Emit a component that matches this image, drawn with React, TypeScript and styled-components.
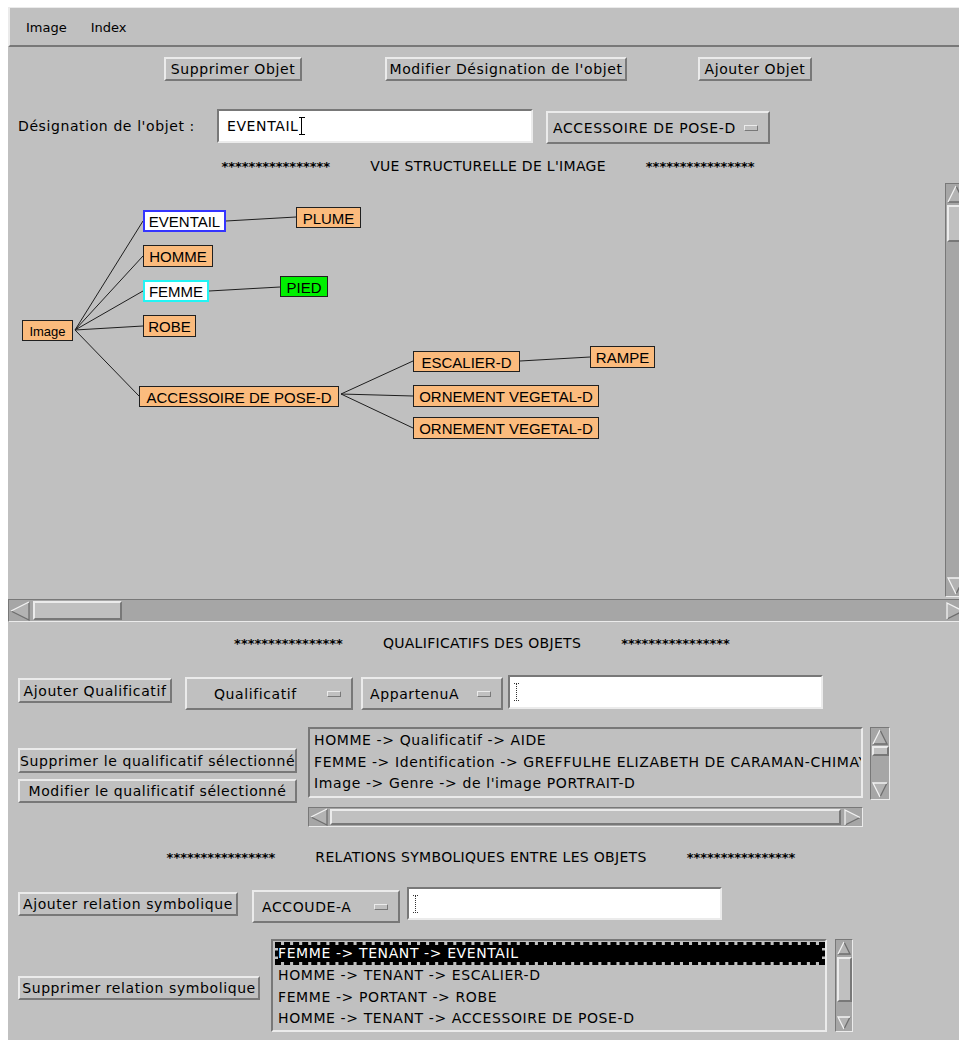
import React from "react";
import styled, { createGlobalStyle, css } from "styled-components";

const BG = "#c0c0c0";
const LIGHT = "#ebebeb";
const DARK = "#787878";
const TROUGH = "#a6a6a6";
const UI_FONT = `"DejaVu Sans", "Liberation Sans", sans-serif`;
const NODE_FONT = `"Liberation Sans", Arial, sans-serif`;

const GlobalStyle = createGlobalStyle`
  html, body { margin: 0; padding: 0; background: #ffffff; overflow: hidden; }
  body { padding: 7px 0 0 8px; font-family: ${UI_FONT}; }
`;

const raised = css`
  border-style: solid;
  border-width: 2px;
  border-color: ${LIGHT} ${DARK} ${DARK} ${LIGHT};
`;
const sunken = css`
  border-style: solid;
  border-width: 2px;
  border-color: ${DARK} ${LIGHT} ${LIGHT} ${DARK};
`;

const Window = styled.div`
  box-sizing: border-box;
  width: 960px;
  height: 1033px;
  background: ${BG};
  display: flex;
  flex-direction: column;
  overflow: hidden;
  color: #000;
  font-family: ${UI_FONT};
  font-size: 14px;
  letter-spacing: 0.6px;
  & * { box-sizing: border-box; }
`;

const MenuBar = styled.div`
  flex: 0 0 40px;
  display: flex;
  align-items: center;
  gap: 24px;
  padding: 1px 0 0 16px;
  border-top: 1px solid ${LIGHT};
  border-left: 2px solid ${LIGHT};
  border-bottom: 2px solid ${DARK};
  font-size: 13px;
  letter-spacing: 0;
`;
const MenuItem = styled.span`
  cursor: default;
`;

const Row = styled.div<{ $mt: number; $h: number }>`
  display: flex;
  align-items: flex-start;
  flex: 0 0 ${(p) => p.$h}px;
  margin-top: ${(p) => p.$mt}px;
`;
const ObjectToolbar = styled(Row)``;
const DesignationRow = styled(Row)``;
const QualifierRow = styled(Row)``;
const RelationRow = styled(Row)``;
const QualifierBlock = styled(Row)``;
const RelationBlock = styled(Row)``;

const PushButton = styled.button<{ $w: number; $h?: number; $ml?: number; $mt?: number }>`
  ${raised};
  flex: none;
  width: ${(p) => p.$w}px;
  height: ${(p) => p.$h ?? 24}px;
  margin: ${(p) => p.$mt ?? 0}px 0 0 ${(p) => p.$ml ?? 0}px;
  padding: 0;
  background: ${BG};
  color: #000;
  font: inherit;
  letter-spacing: inherit;
  white-space: nowrap;
  cursor: default;
`;

const FieldLabel = styled.span<{ $w: number; $ml: number; $h: number }>`
  flex: none;
  width: ${(p) => p.$w}px;
  margin-left: ${(p) => p.$ml}px;
  line-height: ${(p) => p.$h}px;
  white-space: nowrap;
`;

const TextField = styled.div<{ $w: number; $h: number; $ml: number; $mt?: number; $pl: number }>`
  ${sunken};
  flex: none;
  display: flex;
  align-items: center;
  width: ${(p) => p.$w}px;
  height: ${(p) => p.$h}px;
  margin: ${(p) => p.$mt ?? 0}px 0 0 ${(p) => p.$ml}px;
  padding-left: ${(p) => p.$pl}px;
  background: #ffffff;
  white-space: nowrap;
`;

const CaretSvg = styled.svg`
  flex: none;
  display: block;
`;

function Caret({ dotted }: { dotted?: boolean }) {
  return (
    <CaretSvg width="7" height="18" viewBox="0 0 7 18">
      {dotted ? (
        <path d="M1 0.5H6M1 17.5H6M3.5 1V17" stroke="#333" strokeWidth="1" strokeDasharray="1 1" fill="none" />
      ) : (
        <path d="M0 0.5H6M0 17.5H6M2.5 0.5V17.5" stroke="#000" strokeWidth="1" fill="none" />
      )}
    </CaretSvg>
  );
}

const OptionMenu = styled.div<{ $w: number; $h: number; $ml: number; $mt: number; $pl: number }>`
  ${raised};
  flex: none;
  display: flex;
  align-items: center;
  width: ${(p) => p.$w}px;
  height: ${(p) => p.$h}px;
  margin: ${(p) => p.$mt}px 0 0 ${(p) => p.$ml}px;
  padding: 0 10px 0 ${(p) => p.$pl}px;
  background: ${BG};
  cursor: default;
`;
const OptionLabel = styled.span`
  flex: 1;
  white-space: nowrap;
  overflow: hidden;
`;
const OptionIndicator = styled.span`
  flex: none;
  width: 14px;
  height: 6px;
  border-style: solid;
  border-width: 1px;
  border-color: ${LIGHT} ${DARK} ${DARK} ${LIGHT};
  background: ${BG};
`;

const SectionHeader = styled.div<{ $mt: number; $shift: number }>`
  flex: 0 0 16px;
  display: flex;
  justify-content: center;
  align-items: center;
  gap: 40px;
  margin-top: ${(p) => p.$mt}px;
  padding-right: ${(p) => p.$shift}px;
  letter-spacing: 0.3px;
  white-space: nowrap;
`;
const Stars = styled.span`
  font-size: 13px;
  font-weight: bold;
  letter-spacing: 0;
`;

const StructurePane = styled.div`
  flex: 0 0 419px;
  margin-top: 6px;
  display: flex;
`;
const Diagram = styled.div`
  position: relative;
  flex: 1;
  overflow: hidden;
`;
const EdgeLayer = styled.svg`
  position: absolute;
  left: 0;
  top: 0;
  width: 100%;
  height: 100%;
`;

type NodeKind = "plain" | "root" | "selected" | "focus" | "leaf";

const nodeLook: Record<NodeKind, ReturnType<typeof css>> = {
  plain: css`
    background: #fbbb7d;
    border: 1px solid #202020;
    font-size: 15px;
  `,
  root: css`
    background: #fbbb7d;
    border: 1px solid #202020;
    font-size: 13px;
  `,
  selected: css`
    background: #ffffff;
    border: 2px solid #3434ff;
    font-size: 15px;
  `,
  focus: css`
    background: #ffffff;
    border: 2px solid #22f4f4;
    font-size: 15px;
  `,
  leaf: css`
    background: #00f000;
    border: 1px solid #202020;
    font-size: 15px;
  `,
};

const TreeNodeBox = styled.div<{ $kind: NodeKind }>`
  position: absolute;
  display: flex;
  align-items: center;
  justify-content: center;
  padding-top: 1px;
  font-family: ${NODE_FONT};
  letter-spacing: 0;
  white-space: nowrap;
  color: #000;
  ${(p) => nodeLook[p.$kind]};
`;

const ScrollBar = styled.div<{ $vertical?: boolean; $w: number; $h: number; $ml?: number; $mt?: number }>`
  flex: none;
  display: flex;
  flex-direction: ${(p) => (p.$vertical ? "column" : "row")};
  align-items: ${(p) => (p.$vertical ? "stretch" : "center")};
  justify-content: space-between;
  width: ${(p) => p.$w}px;
  height: ${(p) => p.$h}px;
  margin: ${(p) => p.$mt ?? 0}px 0 0 ${(p) => p.$ml ?? 0}px;
  background: ${TROUGH};
  border-style: solid;
  border-width: 1px;
  border-color: ${DARK} ${LIGHT} ${LIGHT} ${DARK};
`;
const ScrollThumb = styled.div<{ $vertical?: boolean; $size: number; $offset: number }>`
  flex: none;
  ${(p) =>
    p.$vertical
      ? css`
          height: ${p.$size}px;
          margin-top: ${p.$offset}px;
          margin-left: 1px;
        `
      : css`
          width: ${p.$size}px;
          margin-left: ${p.$offset}px;
          align-self: stretch;
          margin-top: 1px;
          margin-bottom: 1px;
        `}
  background: ${BG};
  border-style: solid;
  border-width: 2px;
  border-color: ${LIGHT} ${DARK} ${DARK} ${LIGHT};
`;
const ScrollGap = styled.div`
  flex: 1;
`;
const ScrollEndPad = styled.div`
  flex: 0 0 2px;
`;
const ArrowSvg = styled.svg`
  flex: none;
  display: block;
`;

type Dir = "up" | "down" | "left" | "right";
function ScrollArrow({ dir, size }: { dir: Dir; size: number }) {
  const s = size;
  const m = 2;
  const c = s / 2;
  let light = "";
  let dark = "";
  let poly = "";
  if (dir === "up") {
    poly = `${c},${m} ${m},${s - m} ${s - m},${s - m}`;
    light = `M${m},${s - m} L${c},${m}`;
    dark = `M${c},${m} L${s - m},${s - m} L${m},${s - m}`;
  } else if (dir === "down") {
    poly = `${m},${m} ${s - m},${m} ${c},${s - m}`;
    light = `M${c},${s - m} L${m},${m} L${s - m},${m}`;
    dark = `M${s - m},${m} L${c},${s - m}`;
  } else if (dir === "left") {
    poly = `${m},${c} ${s - m},${m} ${s - m},${s - m}`;
    light = `M${m},${c} L${s - m},${m}`;
    dark = `M${s - m},${m} L${s - m},${s - m} L${m},${c}`;
  } else {
    poly = `${m},${m} ${s - m},${c} ${m},${s - m}`;
    light = `M${m},${s - m} L${m},${m} L${s - m},${c}`;
    dark = `M${s - m},${c} L${m},${s - m}`;
  }
  return (
    <ArrowSvg width={s} height={s} viewBox={`0 0 ${s} ${s}`}>
      <polygon points={poly} fill="#b3b3b3" />
      <path d={dark} stroke="#6e6e6e" strokeWidth="1.3" fill="none" />
      <path d={light} stroke="#f2f2f2" strokeWidth="1.3" fill="none" />
    </ArrowSvg>
  );
}

const ButtonColumn = styled.div<{ $ml: number; $mt: number }>`
  flex: none;
  display: flex;
  flex-direction: column;
  gap: 6px;
  margin: ${(p) => p.$mt}px 0 0 ${(p) => p.$ml}px;
`;

const ListGroup = styled.div<{ $ml: number; $mt: number; $gap: number }>`
  flex: none;
  display: grid;
  grid-template-columns: auto auto;
  column-gap: ${(p) => p.$gap}px;
  row-gap: 7px;
  align-items: start;
  margin: ${(p) => p.$mt}px 0 0 ${(p) => p.$ml}px;
`;

const ListBox = styled.div<{ $w: number; $h: number; $pt: number; $pl: number }>`
  ${sunken};
  width: ${(p) => p.$w}px;
  height: ${(p) => p.$h}px;
  padding: ${(p) => p.$pt}px 0 0 ${(p) => p.$pl}px;
  background: ${BG};
  overflow: hidden;
  display: flex;
  flex-direction: column;
`;
const ListRow = styled.div<{ $h: number; $selected?: boolean }>`
  flex: none;
  height: ${(p) => p.$h}px;
  line-height: ${(p) => p.$h - 6}px;
  border: 3px dashed ${(p) => (p.$selected ? "#000" : "transparent")};
  padding: 0;
  background: ${(p) => (p.$selected ? "#000" : "transparent")};
  background-clip: padding-box;
  color: ${(p) => (p.$selected ? "#fff" : "#000")};
  white-space: nowrap;
`;

interface TreeNode {
  label: string;
  x: number;
  y: number;
  w: number;
  h: number;
  kind: NodeKind;
}

const NODES: TreeNode[] = [
  { label: "Image", x: 14, y: 140, w: 51, h: 21, kind: "root" },
  { label: "EVENTAIL", x: 135, y: 30, w: 83, h: 22, kind: "selected" },
  { label: "PLUME", x: 288, y: 27, w: 65, h: 21, kind: "plain" },
  { label: "HOMME", x: 135, y: 65, w: 70, h: 22, kind: "plain" },
  { label: "FEMME", x: 135, y: 100, w: 66, h: 22, kind: "focus" },
  { label: "PIED", x: 272, y: 96, w: 48, h: 21, kind: "leaf" },
  { label: "ROBE", x: 135, y: 135, w: 53, h: 22, kind: "plain" },
  { label: "ACCESSOIRE DE POSE-D", x: 131, y: 206, w: 200, h: 21, kind: "plain" },
  { label: "ESCALIER-D", x: 405, y: 171, w: 107, h: 21, kind: "plain" },
  { label: "RAMPE", x: 582, y: 166, w: 65, h: 22, kind: "plain" },
  { label: "ORNEMENT VEGETAL-D", x: 405, y: 205, w: 186, h: 22, kind: "plain" },
  { label: "ORNEMENT VEGETAL-D", x: 405, y: 237, w: 186, h: 22, kind: "plain" },
];

const EDGES: [number, number, number, number][] = [
  [67, 150, 135, 41],
  [67, 150, 135, 76],
  [67, 150, 135, 111],
  [67, 150, 135, 146],
  [67, 150, 131, 216],
  [218, 41, 288, 37],
  [201, 111, 272, 107],
  [333, 214, 405, 181],
  [333, 214, 405, 216],
  [333, 214, 405, 248],
  [512, 181, 582, 177],
];

const QUALIFIERS = [
  "HOMME -> Qualificatif -> AIDE",
  "FEMME -> Identification -> GREFFULHE ELIZABETH DE CARAMAN-CHIMAY",
  "Image -> Genre -> de l'image PORTRAIT-D",
];

const RELATIONS = [
  "FEMME -> TENANT -> EVENTAIL",
  "HOMME -> TENANT -> ESCALIER-D",
  "FEMME -> PORTANT -> ROBE",
  "HOMME -> TENANT -> ACCESSOIRE DE POSE-D",
];

const STARS = "****************";

export default function App() {
  return (
    <>
      <GlobalStyle />
      <Window>
        <MenuBar>
          <MenuItem>Image</MenuItem>
          <MenuItem>Index</MenuItem>
        </MenuBar>

        <ObjectToolbar $mt={10} $h={24}>
          <PushButton $w={138} $ml={156}>Supprimer Objet</PushButton>
          <PushButton $w={242} $ml={83}>Modifier Désignation de l'objet</PushButton>
          <PushButton $w={114} $ml={71}>Ajouter Objet</PushButton>
        </ObjectToolbar>

        <DesignationRow $mt={28} $h={35}>
          <FieldLabel $w={199} $ml={10} $h={35}>Désignation de l'objet :</FieldLabel>
          <TextField $w={316} $h={34} $ml={0} $pl={8}>
            EVENTAIL
            <Caret />
          </TextField>
          <OptionMenu $w={224} $h={33} $ml={13} $mt={2} $pl={5}>
            <OptionLabel>ACCESSOIRE DE POSE-D</OptionLabel>
            <OptionIndicator />
          </OptionMenu>
        </DesignationRow>

        <SectionHeader $mt={14} $shift={0}>
          <Stars>{STARS}</Stars>
          <span>VUE STRUCTURELLE DE L'IMAGE</span>
          <Stars>{STARS}</Stars>
        </SectionHeader>

        <StructurePane>
          <Diagram>
            <EdgeLayer>
              {EDGES.map(([x1, y1, x2, y2], i) => (
                <line key={i} x1={x1} y1={y1} x2={x2} y2={y2} stroke="#1e1e1e" strokeWidth="1" />
              ))}
            </EdgeLayer>
            {NODES.map((n, i) => (
              <TreeNodeBox
                key={i}
                $kind={n.kind}
                style={{ left: n.x, top: n.y, width: n.w, height: n.h }}
              >
                {n.label}
              </TreeNodeBox>
            ))}
          </Diagram>
          <ScrollBar $vertical $w={23} $h={414} $mt={3}>
            <ScrollArrow dir="up" size={20} />
            <ScrollThumb $vertical $size={37} $offset={1} />
            <ScrollGap />
            <ScrollArrow dir="down" size={20} />
          </ScrollBar>
        </StructurePane>

        <ScrollBar $w={960} $h={23}>
          <ScrollArrow dir="left" size={22} />
          <ScrollThumb $size={89} $offset={2} />
          <ScrollGap />
          <ScrollArrow dir="right" size={20} />
          <ScrollEndPad />
        </ScrollBar>

        <SectionHeader $mt={13} $shift={12}>
          <Stars>{STARS}</Stars>
          <span>QUALIFICATIFS DES OBJETS</span>
          <Stars>{STARS}</Stars>
        </SectionHeader>

        <QualifierRow $mt={24} $h={35}>
          <PushButton $w={154} $h={25} $ml={10} $mt={3}>Ajouter Qualificatif</PushButton>
          <OptionMenu $w={168} $h={33} $ml={13} $mt={2} $pl={27}>
            <OptionLabel>Qualificatif</OptionLabel>
            <OptionIndicator />
          </OptionMenu>
          <OptionMenu $w={142} $h={33} $ml={8} $mt={2} $pl={7}>
            <OptionLabel>AppartenuA</OptionLabel>
            <OptionIndicator />
          </OptionMenu>
          <TextField $w={315} $h={34} $ml={5} $pl={3}>
            <Caret dotted />
          </TextField>
        </QualifierRow>

        <QualifierBlock $mt={15} $h={100}>
          <ButtonColumn $ml={10} $mt={23}>
            <PushButton $w={279} $h={25}>Supprimer le qualificatif sélectionné</PushButton>
            <PushButton $w={279} $h={24}>Modifier le qualificatif sélectionné</PushButton>
          </ButtonColumn>
          <ListGroup $ml={11} $mt={2} $gap={7}>
            <ListBox $w={555} $h={71} $pt={1} $pl={1}>
              {QUALIFIERS.map((q, i) => (
                <ListRow key={i} $h={21.5}>
                  {q}
                </ListRow>
              ))}
            </ListBox>
            <ScrollBar $vertical $w={20} $h={73}>
              <ScrollArrow dir="up" size={18} />
              <ScrollThumb $vertical $size={10} $offset={0} />
              <ScrollGap />
              <ScrollArrow dir="down" size={18} />
            </ScrollBar>
            <ScrollBar $w={555} $h={20}>
              <ScrollArrow dir="left" size={20} />
              <ScrollThumb $size={511} $offset={1} />
              <ScrollGap />
              <ScrollArrow dir="right" size={19} />
            </ScrollBar>
          </ListGroup>
        </QualifierBlock>

        <SectionHeader $mt={22} $shift={14}>
          <Stars>{STARS}</Stars>
          <span>RELATIONS SYMBOLIQUES ENTRE LES OBJETS</span>
          <Stars>{STARS}</Stars>
        </SectionHeader>

        <RelationRow $mt={21} $h={37}>
          <PushButton $w={220} $h={24} $ml={10} $mt={6}>Ajouter relation symbolique</PushButton>
          <OptionMenu $w={148} $h={33} $ml={14} $mt={4} $pl={8}>
            <OptionLabel>ACCOUDE-A</OptionLabel>
            <OptionIndicator />
          </OptionMenu>
          <TextField $w={315} $h={33} $ml={7} $mt={1} $pl={3}>
            <Caret dotted />
          </TextField>
        </RelationRow>

        <RelationBlock $mt={16} $h={93}>
          <PushButton $w={242} $h={24} $ml={10} $mt={37}>Supprimer relation symbolique</PushButton>
          <ListGroup $ml={11} $mt={0} $gap={8}>
            <ListBox $w={556} $h={93} $pt={1} $pl={2}>
              {RELATIONS.map((r, i) => (
                <ListRow key={i} $h={i === 0 ? 23 : 21.5} $selected={i === 0}>
                  {r}
                </ListRow>
              ))}
            </ListBox>
            <ScrollBar $vertical $w={18} $h={93}>
              <ScrollArrow dir="up" size={16} />
              <ScrollThumb $vertical $size={45} $offset={1} />
              <ScrollGap />
              <ScrollArrow dir="down" size={16} />
            </ScrollBar>
          </ListGroup>
        </RelationBlock>
      </Window>
    </>
  );
}
